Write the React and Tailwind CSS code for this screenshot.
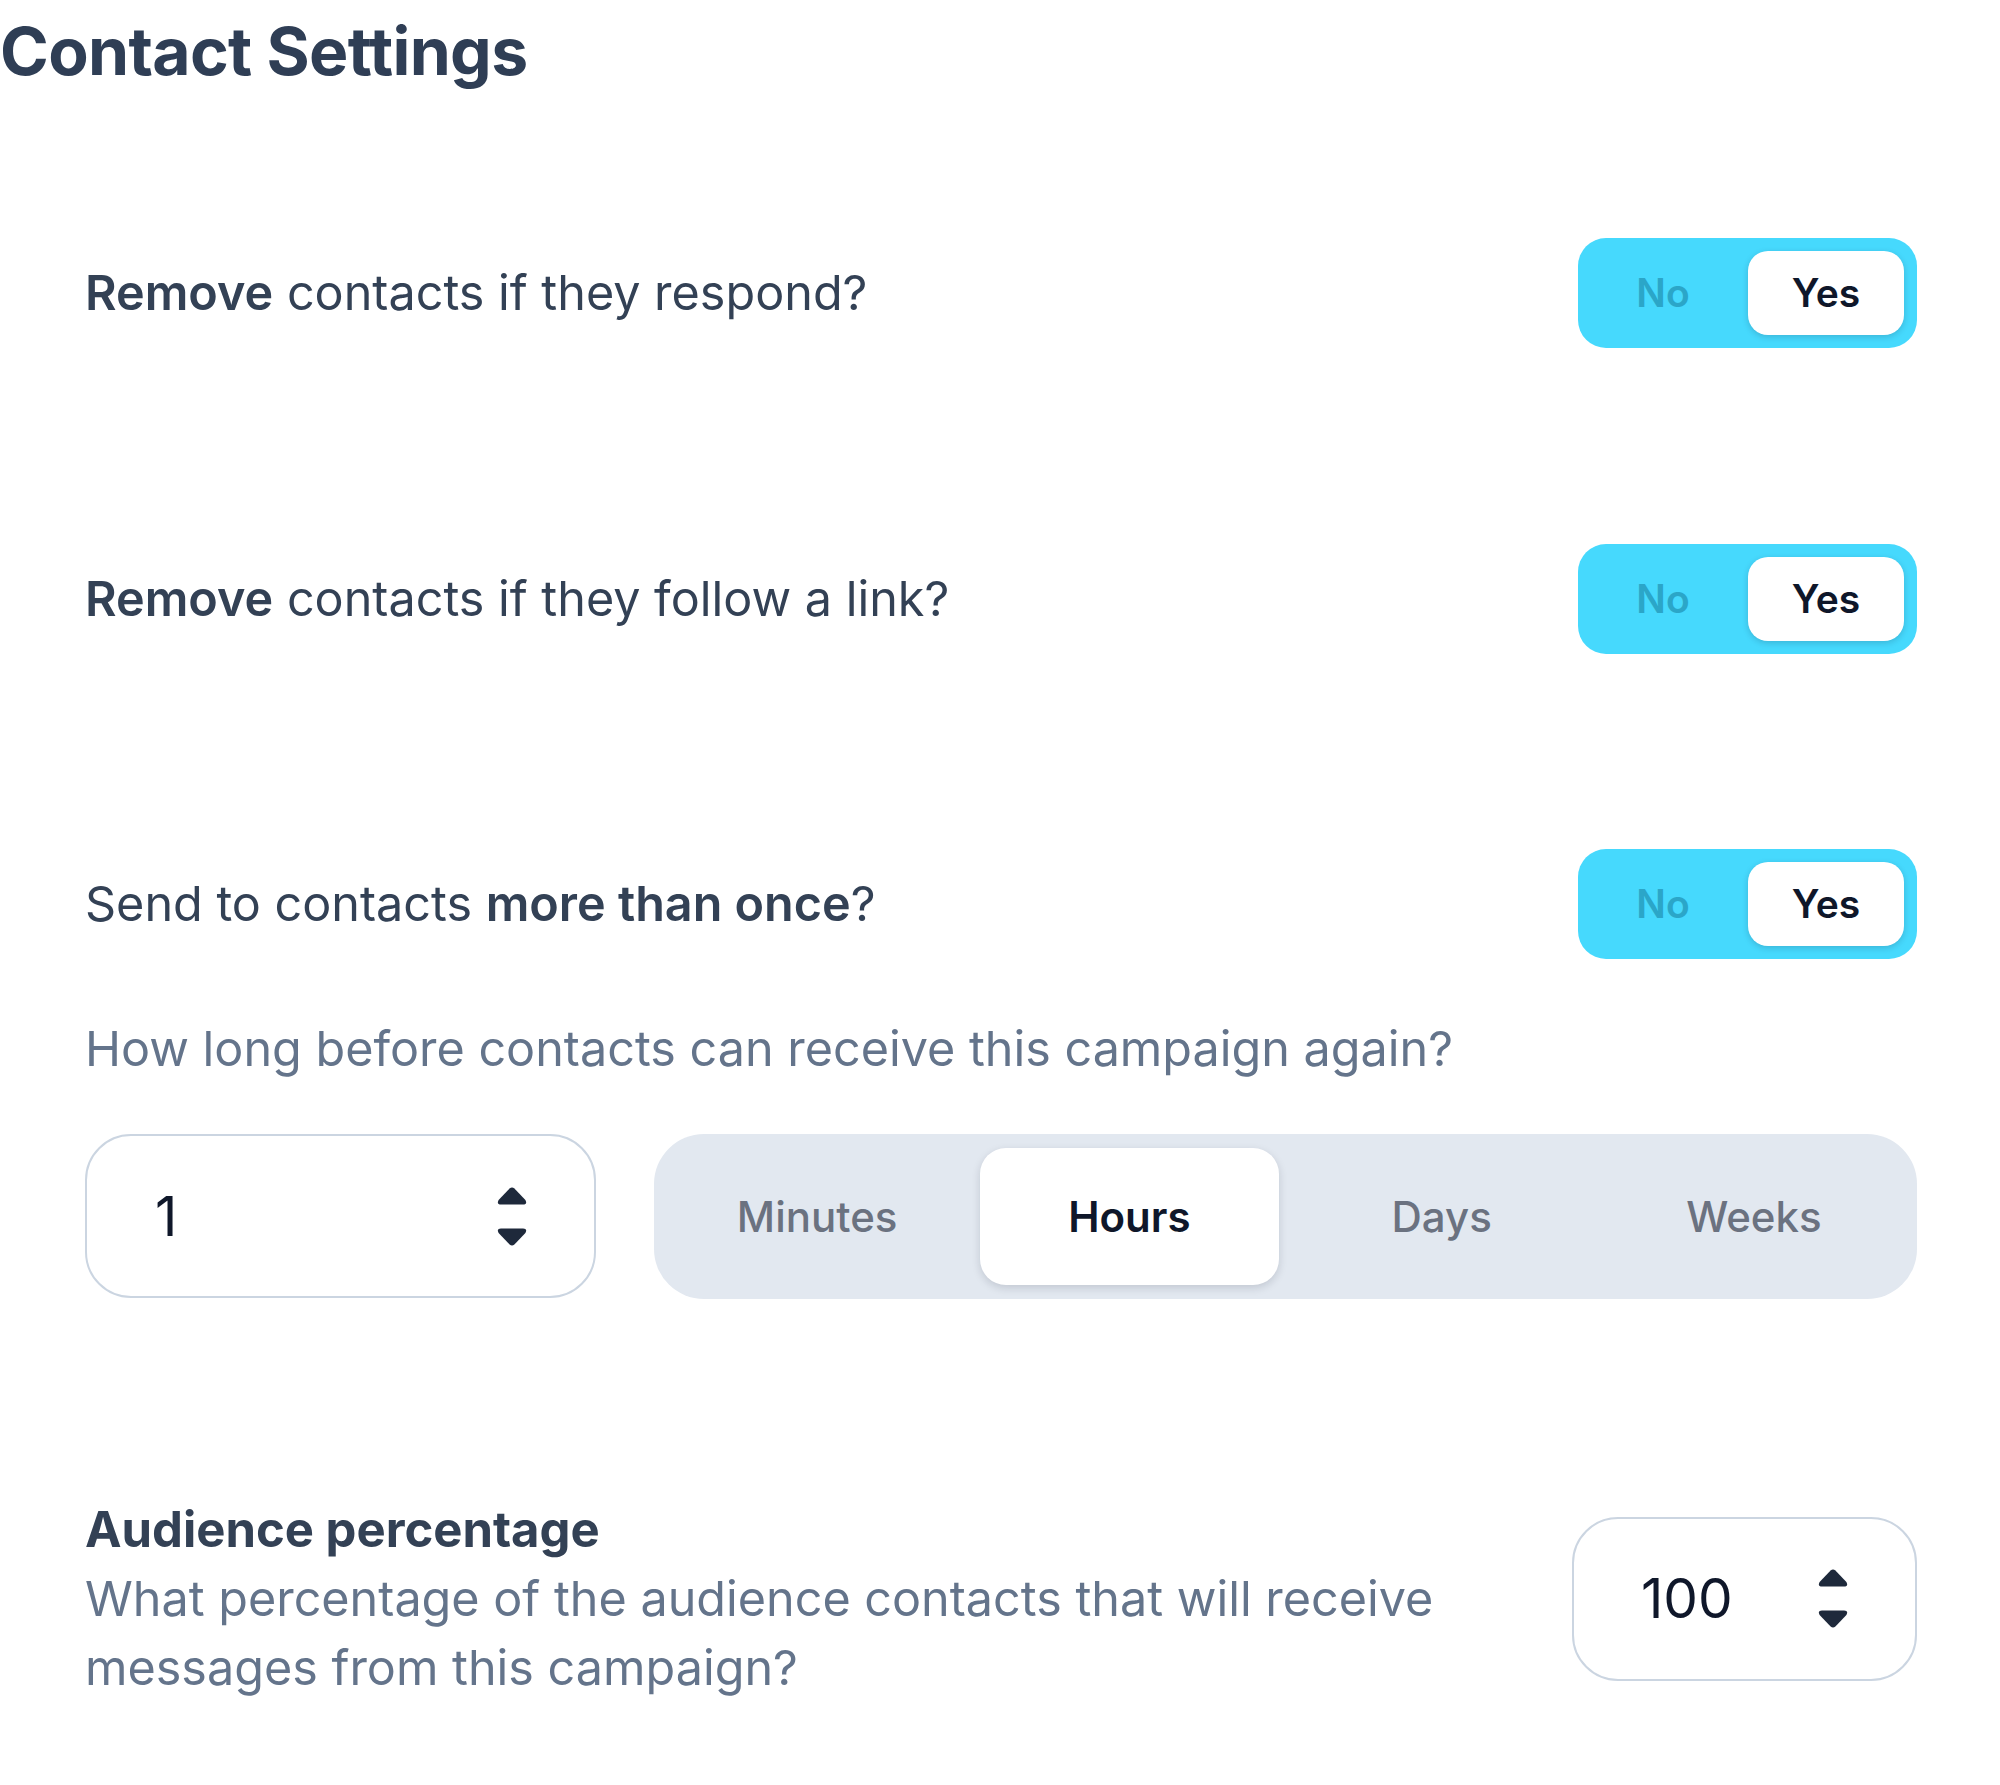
import React from "react";

const font = { fontFamily: "Inter, 'Noto Sans', sans-serif" };

function Stepper() {
  return (
    <svg width="32" height="59" viewBox="0 0 32 59" fill="#1e293b">
      <path d="M13.6 1.6 Q16 -0.6 18.4 1.6 L29.4 13 Q31.6 17.6 27 17.6 L5 17.6 Q0.4 17.6 2.6 13 Z" />
      <path d="M13.6 57.4 Q16 59.6 18.4 57.4 L29.4 46 Q31.6 41.4 27 41.4 L5 41.4 Q0.4 41.4 2.6 46 Z" />
    </svg>
  );
}

function YesNo() {
  return (
    <div className="flex h-[110px] w-[339px] shrink-0 items-center rounded-[28px] bg-[#46d9fd] pr-[13px]">
      <div className="flex h-[84px] flex-1 items-center justify-center text-[39px] font-semibold text-[#2ba6c8]">
        No
      </div>
      <div className="flex h-[84px] w-[156px] items-center justify-center rounded-[20px] bg-white text-[39px] font-semibold text-[#0f172a] shadow-[0_2px_6px_rgba(15,23,42,0.18)]">
        Yes
      </div>
    </div>
  );
}

function Question({ children }) {
  return (
    <div className="flex h-[110px] items-center justify-between">
      <p className="text-[48.5px] text-[#334155]">{children}</p>
      <YesNo />
    </div>
  );
}

export default function App() {
  const units = ["Minutes", "Hours", "Days", "Weeks"];
  return (
    <div className="min-h-[1785px] w-[2000px] bg-white" style={font}>
      <h1 className="pt-[18px] text-[66px] font-bold leading-none tracking-[-0.01em] text-[#2f3e55]">
        Contact Settings
      </h1>

      <div className="ml-[85px] mr-[83px] pt-[154px]">
        <Question>
          <span className="font-semibold">Remove</span> contacts if they respond?
        </Question>
        <div className="h-[196px]" />
        <Question>
          <span className="font-semibold">Remove</span> contacts if they follow a link?
        </Question>
        <div className="h-[195px]" />
        <Question>
          Send to contacts <span className="font-semibold">more than once</span>?
        </Question>

        <p className="mt-[60px] text-[48.5px] leading-[60px] text-[#64748b]">
          How long before contacts can receive this campaign again?
        </p>

        <div className="mt-[55px] flex gap-[58px]">
          <div className="flex h-[164px] w-[511px] shrink-0 items-center justify-between rounded-[46px] border-2 border-[#cbd5e1] pl-[68px] pr-[66px]">
            <span className="text-[55px] text-[#0f172a]">1</span>
            <Stepper />
          </div>
          <div className="flex h-[165px] flex-1 items-center gap-[14px] rounded-[50px] bg-[#e2e8f0] px-[14px]">
            {units.map((u) =>
              u === "Hours" ? (
                <div
                  key={u}
                  className="flex h-[137px] flex-1 items-center justify-center rounded-[26px] bg-white text-[42px] font-semibold text-[#0f172a] shadow-[0_3px_8px_rgba(15,23,42,0.15)]"
                >
                  {u}
                </div>
              ) : (
                <div
                  key={u}
                  className="flex h-[137px] flex-1 items-center justify-center text-[42px] font-medium text-[#6b7280]"
                >
                  {u}
                </div>
              )
            )}
          </div>
        </div>

        <div className="mt-[196px] flex items-center justify-between">
          <div className="leading-[69px]">
            <p className="text-[49px] font-bold text-[#334155]">Audience percentage</p>
            <p className="w-[1420px] text-[48.5px] text-[#64748b]">
              What percentage of the audience contacts that will receive messages from this campaign?
            </p>
          </div>
          <div className="flex h-[164px] w-[345px] shrink-0 items-center justify-between rounded-[46px] border-2 border-[#cbd5e1] pl-[67px] pr-[66px]">
            <span className="text-[55px] text-[#0f172a]">100</span>
            <Stepper />
          </div>
        </div>
      </div>
    </div>
  );
}
